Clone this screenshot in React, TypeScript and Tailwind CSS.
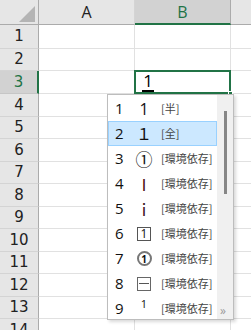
import React from "react";

const rowHeights = [
  "h-[24px]",
  "h-[22px]",
  "h-[23px]",
  "h-[23px]",
  "h-[22px]",
  "h-[23px]",
  "h-[22px]",
  "h-[23px]",
  "h-[22px]",
  "h-[23px]",
  "h-[22px]",
  "h-[23px]",
  "h-[22px]",
  "h-[23px]",
];

const hdrFont = { fontFamily: '"DejaVu Sans", Verdana, sans-serif' };
const uiFont = { fontFamily: '"Open Sans", "Noto Sans", "Noto Sans CJK JP", sans-serif' };
const cjkFont = { fontFamily: '"Noto Sans CJK JP", "Noto Sans", sans-serif' };

type Cand = { n: number; glyph: React.ReactNode; note: string };

const cands: Cand[] = [
  { n: 1, glyph: <span className="text-[16px]">1</span>, note: "[半]" },
  { n: 2, glyph: <span className="text-[16px]">１</span>, note: "[全]" },
  { n: 3, glyph: <span className="text-[17px]" style={{ fontFamily: '"Noto Sans CJK JP", sans-serif' }}>①</span>, note: "[環境依存]" },
  { n: 4, glyph: <span className="text-[16px] text-[#4a1010]" style={{ fontFamily: '"Noto Sans CJK JP", sans-serif' }}>Ⅰ</span>, note: "[環境依存]" },
  { n: 5, glyph: <span className="text-[16px] text-[#3a1020]" style={{ fontFamily: '"Noto Sans CJK JP", sans-serif' }}>ⅰ</span>, note: "[環境依存]" },
  {
    n: 6,
    glyph: (
      <span className="flex h-[14px] w-[14px] items-center justify-center border border-[#555] text-[12px] leading-none">
        1
      </span>
    ),
    note: "[環境依存]",
  },
  {
    n: 7,
    glyph: (
      <span className="flex h-[15px] w-[15px] items-center justify-center rounded-full border-2 border-[#777] text-[10px] font-bold leading-none">
        1
      </span>
    ),
    note: "[環境依存]",
  },
  {
    n: 8,
    glyph: (
      <span className="flex h-[14px] w-[14px] items-center justify-center border border-[#666]">
        <span className="block h-[1px] w-[10px] bg-[#555]" />
      </span>
    ),
    note: "[環境依存]",
  },
  { n: 9, glyph: <span className="-mt-[10px] text-[11px]">1</span>, note: "[環境依存]" },
];

export default function App() {
  return (
    <div className="relative h-[330px] w-[251px] overflow-hidden bg-white" style={uiFont}>
      {/* header row */}
      <div className="flex h-[25px]">
        <div className="relative w-[39px] shrink-0 border-r border-b border-[#ababab] bg-[#e6e6e6]">
          <svg className="absolute left-[19px] top-[6px]" width="16" height="16" viewBox="0 0 16 16">
            <polygon points="16,0 16,16 0,16" fill="#b4b4b4" />
          </svg>
        </div>
        <div className="flex w-[96px] shrink-0 items-center justify-center border-r border-b border-[#d4d4d4] border-b-[#ababab] bg-[#e6e6e6] text-[16px] text-[#222]">
          A
        </div>
        <div className="flex w-[96px] shrink-0 items-center justify-center border-r border-[#ababab] border-b-2 border-b-[#217346] bg-[#d2d2d2] text-[16px] text-[#217346]">
          B
        </div>
        <div className="flex-1 border-b border-[#ababab] bg-[#e6e6e6]" />
      </div>

      {rowHeights.map((h, i) => {
        const r = i + 1;
        const sel = r === 3;
        return (
          <div key={r} className={`flex ${h}`}>
            <div
              className={
                sel
                  ? "flex w-[39px] shrink-0 items-center justify-center border-b border-r-2 border-[#c6c6c6] border-r-[#217346] bg-[#d2d2d2] text-[15px] text-[#217346]"
                  : "flex w-[39px] shrink-0 items-center justify-center border-b border-r border-[#d4d4d4] border-r-[#ababab] bg-[#e6e6e6] text-[15px] text-[#222]"
              }
              style={hdrFont}
            >
              {r}
            </div>
            <div className="w-[96px] shrink-0 border-r border-b border-[#e1e1e1]" />
            <div className="relative w-[96px] shrink-0 border-r border-b border-[#e1e1e1]">
              {sel && (
                <>
                  <div className="absolute -left-[1px] -top-[1px] bottom-[-1px] right-[-1px] border-2 border-[#217346]" />
                  <div className="absolute right-[-3px] bottom-[-3px] h-[5px] w-[5px] border border-white bg-[#217346]" />
                  <div className="absolute left-[7px] top-[0px] flex flex-col items-center">
                    <span className="text-[17px] leading-[20px] text-black">1</span>
                    <span className="-mt-[1px] block h-[2px] w-[12px] bg-black" />
                  </div>
                </>
              )}
            </div>
            <div className="flex-1 border-b border-[#e1e1e1]" />
          </div>
        );
      })}

      {/* IME candidate window */}
      <div className="absolute left-[107px] top-[94px] flex h-[226px] w-[127px] border border-[#bdbdbd] bg-white shadow-[2px_2px_3px_rgba(0,0,0,0.15)]">
        <div className="flex flex-1 flex-col pt-[1px]">
          {cands.map((c) => {
            const selected = c.n === 2;
            return (
              <div
                key={c.n}
                className={
                  selected
                    ? "flex h-[25px] shrink-0 items-center border border-[#99d1ff] bg-[#cce8ff]"
                    : "flex h-[25px] shrink-0 items-center border border-transparent"
                }
              >
                <span className="w-[18px] shrink-0 pl-[6px] text-[15px] leading-none text-[#111]">{c.n}</span>
                <span className="flex w-[34px] shrink-0 items-center justify-center leading-none text-[#111]">{c.glyph}</span>
                <span className="text-[11px] leading-none text-[#444]" style={cjkFont}>
                  {c.note}
                </span>
              </div>
            );
          })}
        </div>
        <div className="relative flex w-[16px] shrink-0 flex-col items-center bg-[#f0f0f0]">
          <div className="absolute left-[7px] top-[16px] h-[83px] w-[3px] bg-[#868686]" />
          <span className="absolute bottom-[2px] left-[3px] text-[12px] leading-none text-[#999]">»</span>
        </div>
      </div>
    </div>
  );
}
